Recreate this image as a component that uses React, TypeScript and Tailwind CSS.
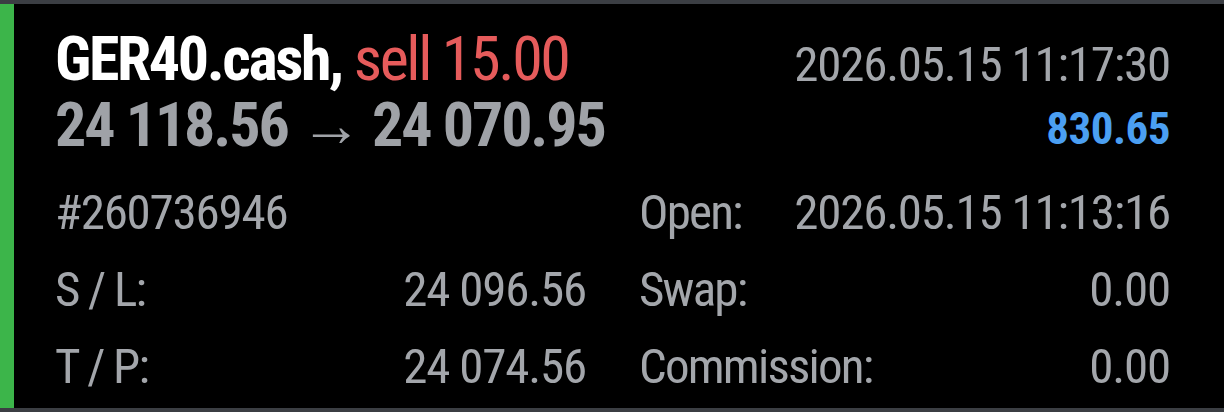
import React from 'react';

const FONT = "font-['Roboto','Liberation_Sans',sans-serif] [font-stretch:75%]";

interface Row {
  label: string;
  value: string;
}

const LEFT: (Row | string)[] = ['#260736946', { label: 'S / L:', value: '24 096.56' }, { label: 'T / P:', value: '24 074.56' }];
const RIGHT: Row[] = [
  { label: 'Open:', value: '2026.05.15 11:13:16' },
  { label: 'Swap:', value: '0.00' },
  { label: 'Commission:', value: '0.00' },
];

function Cell({ item }: { item: Row | string }) {
  if (typeof item === 'string') {
    return <div className="h-[77px] leading-[77px]">{item}</div>;
  }
  return (
    <div className="flex h-[77px] items-center justify-between leading-[77px]">
      <span className="tracking-[-1.8px]">{item.label}</span>
      <span>{item.value}</span>
    </div>
  );
}

export default function App() {
  return (
    <div className={`flex h-[412px] w-[1224px] flex-col whitespace-nowrap bg-black ${FONT}`}>
      <div className="h-[4px] bg-[#3b3e43]" />
      <div className="flex flex-1">
        <div className="w-[14px] bg-[#3cb54a]" />
        <div className="flex-1 pl-[41px] pr-[54px] pt-[22px]">
          <div className="flex justify-between">
            <div className="font-bold">
              <div className="text-[62px] leading-[66px] tracking-[-2.4px] text-white">
                GER40.cash, <span className="font-normal text-[#e65b5b]">sell 15.00</span>
              </div>
              <div className="text-[62px] leading-[66px] tracking-[-2.1px] text-[#9fa2a7]">24 118.56 → 24 070.95</div>
            </div>
            <div className="flex flex-col items-end pt-[9px]">
              <div className="text-[49px] leading-[60px] tracking-[-1.2px] text-[#a3a6ab]">2026.05.15 11:17:30</div>
              <div className="mt-[4px] text-[45px] font-bold leading-[60px] tracking-[-0.5px] text-[#4b9ff2]">830.65</div>
            </div>
          </div>
          <div className="mt-[15px] grid grid-cols-2 gap-x-[53px] text-[49px] tracking-[-1.2px] text-[#a3a6ab]">
            <div>
              {LEFT.map((it, i) => (
                <Cell key={i} item={it} />
              ))}
            </div>
            <div>
              {RIGHT.map((it, i) => (
                <Cell key={i} item={it} />
              ))}
            </div>
          </div>
        </div>
      </div>
      <div className="h-[4px] bg-[#3b3e43]" />
    </div>
  );
}
